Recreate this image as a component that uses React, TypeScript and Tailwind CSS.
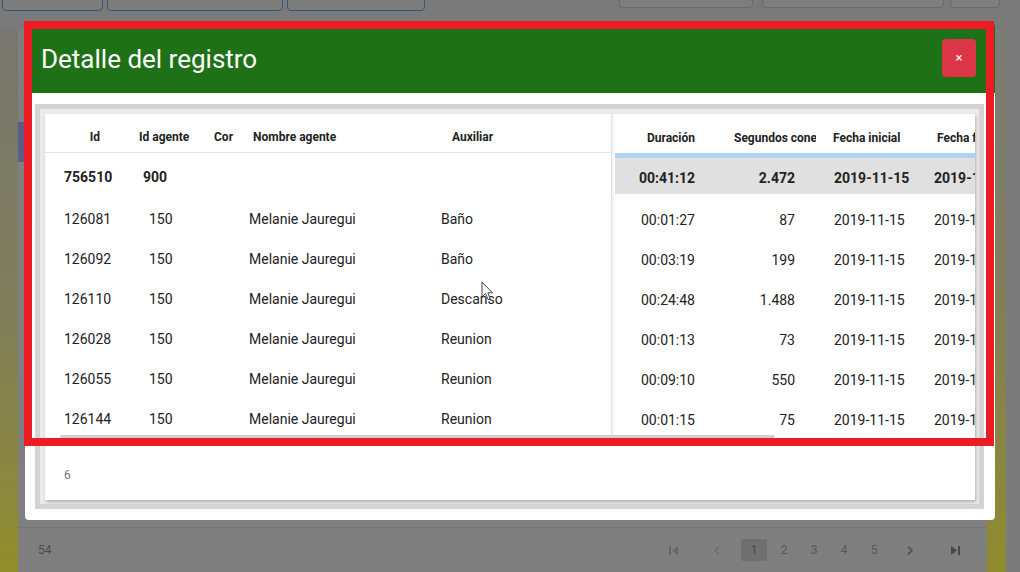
import React from "react";

type Row = { id: string; agent: string; name: string; aux: string; dur: string; secs: string; start: string; end: string };

const ROWS: Row[] = [
  { id: "126081", agent: "150", name: "Melanie Jauregui", aux: "Baño", dur: "00:01:27", secs: "87", start: "2019-11-15", end: "2019-11-15" },
  { id: "126092", agent: "150", name: "Melanie Jauregui", aux: "Baño", dur: "00:03:19", secs: "199", start: "2019-11-15", end: "2019-11-15" },
  { id: "126110", agent: "150", name: "Melanie Jauregui", aux: "Descanso", dur: "00:24:48", secs: "1.488", start: "2019-11-15", end: "2019-11-15" },
  { id: "126028", agent: "150", name: "Melanie Jauregui", aux: "Reunion", dur: "00:01:13", secs: "73", start: "2019-11-15", end: "2019-11-15" },
  { id: "126055", agent: "150", name: "Melanie Jauregui", aux: "Reunion", dur: "00:09:10", secs: "550", start: "2019-11-15", end: "2019-11-15" },
  { id: "126144", agent: "150", name: "Melanie Jauregui", aux: "Reunion", dur: "00:01:15", secs: "75", start: "2019-11-15", end: "2019-11-15" },
];

function Pager() {
  return (
    <div className="flex items-center text-[12px] text-[#585858]">
      {/* first page */}
      <div className="w-[26px] flex justify-center">
        <svg width="11" height="11" viewBox="0 0 11 11" fill="#666">
          <rect x="1" y="1" width="2" height="9" />
          <path d="M10 1 L4 5.5 L10 10 Z" />
        </svg>
      </div>
      <div className="w-[26px] ml-[18px] flex justify-center">
        <svg width="8" height="11" viewBox="0 0 8 11" fill="none" stroke="#6e6e6e" strokeWidth="1.6">
          <polyline points="6,1.5 2,5.5 6,9.5" />
        </svg>
      </div>
      <div className="w-[26px] h-[22px] ml-[11px] bg-[#707070] rounded-[2px] flex items-center justify-center text-[#4a4a4a]">1</div>
      <div className="w-[26px] ml-[4px] text-center">2</div>
      <div className="w-[26px] ml-[4px] text-center">3</div>
      <div className="w-[26px] ml-[4px] text-center">4</div>
      <div className="w-[26px] ml-[4px] text-center">5</div>
      <div className="w-[26px] ml-[10px] flex justify-center">
        <svg width="8" height="11" viewBox="0 0 8 11" fill="none" stroke="#555" strokeWidth="1.8">
          <polyline points="2,1.5 6,5.5 2,9.5" />
        </svg>
      </div>
      <div className="w-[26px] ml-[19px] flex justify-center">
        <svg width="11" height="11" viewBox="0 0 11 11" fill="#474747">
          <path d="M1 1 L7 5.5 L1 10 Z" />
          <rect x="8" y="1" width="2" height="9" />
        </svg>
      </div>
    </div>
  );
}

export default function App() {
  return (
    <div className="relative w-[1020px] h-[572px] overflow-hidden bg-[#7a7a7a] font-['Roboto',sans-serif]">
      {/* page behind the overlay */}
      <div className="flex flex-col h-full">
        <div className="h-[30px] flex items-start shrink-0">
          <div className="ml-[2px] w-[101px] h-[12px] -mt-px border border-[#35557f] rounded-b-[4px] bg-[#7c7c7c]" />
          <div className="ml-[4px] w-[176px] h-[12px] -mt-px border border-[#35557f] rounded-b-[4px] bg-[#7c7c7c]" />
          <div className="ml-[4px] w-[138px] h-[12px] -mt-px border border-[#35557f] rounded-b-[4px] bg-[#7c7c7c]" />
          <div className="ml-[194px] w-[134px] h-[9px] -mt-px border border-[#6a6a6a] rounded-b-[4px] bg-[#7e7e7e]" />
          <div className="ml-[9px] w-[182px] h-[9px] -mt-px border border-[#6a6a6a] rounded-b-[4px] bg-[#7e7e7e]" />
          <div className="ml-[6px] w-[50px] h-[9px] -mt-px border border-[#6a6a6a] rounded-b-[4px] bg-[#7e7e7e]" />
        </div>
        <div className="flex flex-1">
          <div className="w-[18px] bg-linear-to-b from-[#77776f] via-[#7f7d5a] to-[#918d28]" />
          <div className="w-[969px] bg-[#7f7f7f] flex flex-col">
            <div className="mt-[92px] w-[7px] h-[40px] bg-[#5c5c8a]" />
            <div className="flex-1" />
            <div className="h-[45px] border-t border-[#747474] flex items-center justify-between pl-[20px] pr-[19px]">
              <span className="text-[12px] text-[#4c4c4c]">54</span>
              <Pager />
            </div>
          </div>
          <div className="w-[19px] bg-linear-to-b from-[#7b7b77] via-[#817f58] to-[#8f8b2a]" />
          <div className="flex-1 bg-[#7b7b7b]" />
        </div>
      </div>

      {/* modal */}
      <div className="absolute left-[25px] top-[22px] w-[970px] h-[498px] bg-white rounded-[4px] flex flex-col overflow-hidden">
        <div className="h-[71px] shrink-0 bg-[#1f7117] flex items-center justify-between pl-[16px] pr-[19px]">
          <h2 className="text-white text-[26px] font-normal leading-none pt-[2px]">Detalle del registro</h2>
          <button className="w-[34px] h-[38px] rounded-[4px] bg-[#da3647] text-white text-[13px] leading-none">×</button>
        </div>
        <div className="flex-1 pt-[11px] pl-[10px] pr-[11px] pb-[11px]">
          <div className="h-full border-[5px] border-[#d3d3d3] bg-[#ebebeb] pt-[5px] pl-[5px] pr-[4px] pb-[4px]">
            <div className="h-full bg-white shadow-[1px_2px_3px_rgba(0,0,0,0.25)] flex flex-col text-[#222]">
              <div className="relative h-[324px] flex shrink-0">
                {/* frozen columns */}
                <div className="w-[566px] shrink-0">
                  <div className="h-[39px] border-b border-[#e4e4e4] flex items-end pb-[6px] text-[12px] font-bold whitespace-nowrap">
                    <div className="w-[85px] pl-[15px] text-center">Id</div>
                    <div className="w-[75px] pl-[9px]">Id agente</div>
                    <div className="w-[40px] pl-[9px]">Cor</div>
                    <div className="w-[185px] pl-[8px]">Nombre agente</div>
                    <div className="w-[85px] text-center">Auxiliar</div>
                  </div>
                  <div className="h-[4px]" />
                  <div className="h-[36px] mb-[4px] pt-[5px] flex items-center text-[14px] font-bold">
                    <div className="w-[85px] pl-[19px]">756510</div>
                    <div className="w-[75px] pl-[13px]">900</div>
                  </div>
                  {ROWS.map((r) => (
                    <div key={r.id} className="h-[40px] pt-[4px] flex items-center text-[14px]">
                      <div className="w-[85px] pl-[19px]">{r.id}</div>
                      <div className="w-[75px] pl-[19px]">{r.agent}</div>
                      <div className="w-[40px]" />
                      <div className="w-[185px] pl-[4px]">{r.name}</div>
                      <div className="pl-[11px]">{r.aux}</div>
                    </div>
                  ))}
                </div>
                <div className="w-[4px] shrink-0 border-l border-[#e2e2e2] bg-linear-to-r from-[#f0f0f0] to-white" />
                {/* scrolling columns */}
                <div className="flex-1 overflow-hidden">
                  <div className="w-[420px]">
                    <div className="h-[39px] flex items-end pb-[6px] text-[12px] font-bold whitespace-nowrap">
                      <div className="w-[90px] text-right pr-[10px]">Duración</div>
                      <div className="w-[115px] pl-[29px]">
                        <div className="w-[82px] overflow-hidden">Segundos cone</div>
                      </div>
                      <div className="w-[100px] pl-[13px]">Fecha inicial</div>
                      <div className="w-[115px] pl-[17px]">Fecha final</div>
                    </div>
                    <div className="h-[5px] bg-[#aed3f3]" />
                    <div className="h-[36px] mb-[4px] pt-[5px] bg-[#e0e0e0] flex items-center text-[14px] font-bold whitespace-nowrap">
                      <div className="w-[90px] text-right pr-[10px]">00:41:12</div>
                      <div className="w-[115px] text-right pr-[25px]">2.472</div>
                      <div className="w-[100px] pl-[14px]">2019-11-15</div>
                      <div className="w-[115px] pl-[14px]">2019-11-15</div>
                    </div>
                    {ROWS.map((r) => (
                      <div key={r.id} className="h-[40px] pt-[4px] flex items-center text-[14px] whitespace-nowrap">
                        <div className="w-[90px] text-right pr-[10px]">{r.dur}</div>
                        <div className="w-[115px] text-right pr-[25px]">{r.secs}</div>
                        <div className="w-[100px] pl-[14px]">{r.start}</div>
                        <div className="w-[115px] pl-[14px]">{r.end}</div>
                      </div>
                    ))}
                  </div>
                </div>
                {/* horizontal scrollbar thumb */}
                <div className="absolute bottom-0 left-[15px] w-[715px] h-[3px] bg-[#cfcfcf] rounded-full" />
              </div>
              <div className="flex-1 pl-[19px] pt-[28px] text-[12px] text-[#777]">6</div>
            </div>
          </div>
        </div>
      </div>

      {/* annotation frame */}
      <div className="absolute left-[24px] top-[21px] w-[970px] h-[425px] border-[8px] border-[#ed1c24]" />

      {/* mouse pointer */}
      <svg className="absolute left-[481px] top-[281px]" width="13" height="20" viewBox="0 0 13 20">
        <path d="M1 1 L1 16 L4.5 12.5 L7 18.5 L9.2 17.6 L6.8 11.8 L11.5 11.8 Z" fill="#fff" stroke="#444" strokeWidth="1" strokeLinejoin="round" />
      </svg>
    </div>
  );
}
